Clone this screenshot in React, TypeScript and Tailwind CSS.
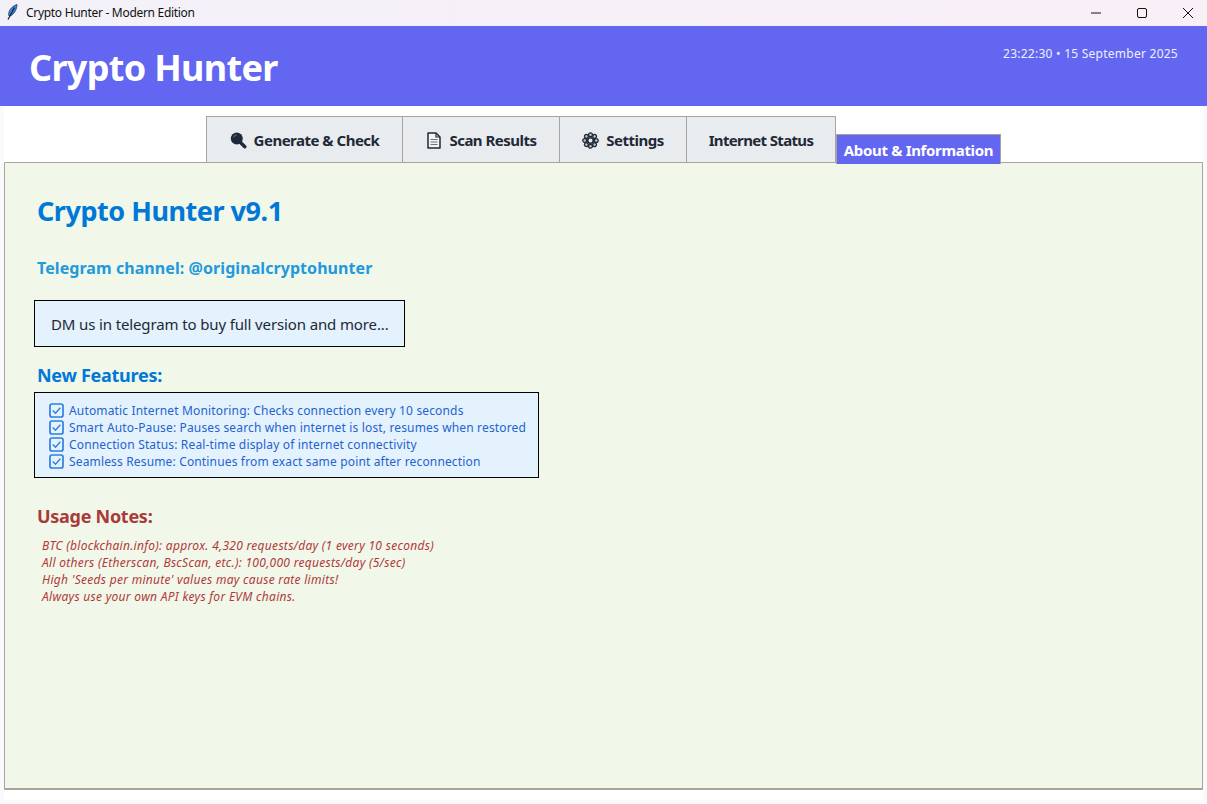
const font = "font-['Noto_Sans','Open_Sans',sans-serif]";

function Feather() {
  return (
    <svg width="12" height="16" viewBox="0 0 12 16" className="ml-[6px] -mt-[3px]">
      <path d="M11 0.500 C7.500 1.500 4 4.500 3 8 C2.500 10 2.500 11 3 12 C6 12 8.500 9 10 5.500 C10.700 3.500 11 2 11 0.500 Z" fill="#3f86dc" stroke="#1e3a5f" strokeWidth="0.800" />
      <path d="M8.500 3.500 L2 15.500" stroke="#111827" strokeWidth="1.100" fill="none" />
    </svg>
  );
}

function SearchGlyph() {
  return (
    <svg width="17" height="17" viewBox="0 0 17 17">
      <circle cx="6.800" cy="6.500" r="6" fill="#1f2937" />
      <path d="M3.600 5.500 A3.400 3.400 0 0 1 6.500 2.900" stroke="#5b6472" strokeWidth="1.100" fill="none" />
      <path d="M10.500 10.500 L14.800 14.800" stroke="#1f2937" strokeWidth="3.400" strokeLinecap="round" />
    </svg>
  );
}

function DocGlyph() {
  return (
    <svg width="14" height="17" viewBox="0 0 14 17">
      <path d="M1 1 H9 L13 5 V16 H1 Z" fill="#f3f4f6" stroke="#1f2937" strokeWidth="1.500" strokeLinejoin="round" />
      <path d="M9 1 V5 H13" fill="none" stroke="#1f2937" strokeWidth="1.200" />
      <path d="M3.500 7.500 H10.500 M3.500 10 H10.500 M3.500 12.500 H10.500" stroke="#6b7280" strokeWidth="1.200" />
    </svg>
  );
}

function GearGlyph() {
  const petals = [0, 45, 90, 135, 180, 225, 270, 315];
  return (
    <svg width="17" height="17" viewBox="0 0 17 17">
      {petals.map((a) => (
        <circle key={a} cx="8.500" cy="2.700" r="1.900" fill="#c3c8d0" stroke="#1f2937" strokeWidth="1.300" transform={`rotate(${a} 8.500 8.500)`} />
      ))}
      <circle cx="8.500" cy="8.500" r="2.800" fill="#e9ecef" stroke="#1f2937" strokeWidth="1.600" />
    </svg>
  );
}

function CheckGlyph() {
  return (
    <svg width="15" height="15" viewBox="0 0 15 15" className="shrink-0">
      <rect x="1" y="1" width="13" height="13" rx="2" fill="#e3f2fd" stroke="#2f7fdf" strokeWidth="1.700" />
      <path d="M3.800 7.500 L6.500 10.200 L11.300 4.800" fill="none" stroke="#2f7fdf" strokeWidth="1.400" />
    </svg>
  );
}

function Tab({ w, children }: { w: string; children: React.ReactNode }) {
  return (
    <div className={`${w} h-[46px] flex items-center justify-center pt-[1px] bg-[#e9ecef] border border-b-0 border-[#a8a49c] -ml-px first:ml-0 text-[15px] font-bold text-[#1f2937] tracking-[-0.5px]`}>
      {children}
    </div>
  );
}

const features = [
  "Automatic Internet Monitoring: Checks connection every 10 seconds",
  "Smart Auto-Pause: Pauses search when internet is lost, resumes when restored",
  "Connection Status: Real-time display of internet connectivity",
  "Seamless Resume: Continues from exact same point after reconnection",
];

const notes = [
  "BTC (blockchain.info): approx. 4,320 requests/day (1 every 10 seconds)",
  "All others (Etherscan, BscScan, etc.): 100,000 requests/day (5/sec)",
  "High 'Seeds per minute' values may cause rate limits!",
  "Always use your own API keys for EVM chains.",
];

export default function App() {
  return (
    <div className={`${font} w-[1207px] h-[804px] overflow-hidden flex flex-col bg-[#fafafc]`}>
      <div className="h-[26px] shrink-0 flex items-center bg-gradient-to-r from-[#f3f1f8] to-[#f9eff7]">
        <Feather />
        <span className="ml-[8px] text-[12px] text-[#111] tracking-[-0.3px]">Crypto Hunter - Modern Edition</span>
        <div className="ml-auto flex items-center">
          <svg width="12" height="12" viewBox="0 0 12 12" className="mr-[34px]"><path d="M1 6 H11" stroke="#111" strokeWidth="1" /></svg>
          <svg width="12" height="12" viewBox="0 0 12 12" className="mr-[34px]"><rect x="1.500" y="1.500" width="9" height="9" rx="1.500" fill="none" stroke="#111" strokeWidth="1" /></svg>
          <svg width="12" height="12" viewBox="0 0 12 12" className="mr-[13px]"><path d="M1 1 L11 11 M11 1 L1 11" stroke="#111" strokeWidth="1" /></svg>
        </div>
      </div>

      <div className="h-[80px] shrink-0 bg-[#6366f1] flex justify-between text-white">
        <div className="pl-[29px] pt-[18px] text-[36px] leading-[48px] font-bold tracking-[-0.68px]">Crypto Hunter</div>
        <div className="pr-[29px] pt-[19px] text-[12px] leading-[18px] text-[#eef0ff] tracking-[0.25px]">23:22:30 • 15 September 2025</div>
      </div>

      <div className="mx-[4px] h-[694px] shrink-0 bg-white flex flex-col">
        <div className="h-[56px] shrink-0 pl-[202px] flex items-end relative z-10">
          <Tab w="w-[197px]"><SearchGlyph /><span className="ml-[7px]">Generate &amp; Check</span></Tab>
          <Tab w="w-[158px]"><span className="ml-[2px] flex items-center"><DocGlyph /><span className="ml-[8px]">Scan Results</span></span></Tab>
          <Tab w="w-[128px]"><GearGlyph /><span className="ml-[7px]">Settings</span></Tab>
          <Tab w="w-[150px]"><span className="tracking-[-0.65px]">Internet Status</span></Tab>
          <div className="w-[165px] h-[30px] -mb-[2px] flex items-center justify-center pt-[1px] bg-[#6366f1] border-t border-x border-[#a8a49c] text-[15px] font-bold text-white tracking-[-0.33px]">About &amp; Information</div>
        </div>

        <div className="h-[628px] shrink-0 bg-[#f1f7e9] border border-[#a8a49c] border-b-2 rounded-[1px] pl-[32px] pt-[29px]">
          <div className="text-[27px] leading-[38px] font-bold text-[#0078d7] tracking-[-0.47px]">Crypto Hunter v9.1</div>
          <div className="mt-[27px] text-[16px] leading-[22px] font-bold text-[#2199dc] tracking-[0.07px]">Telegram channel: @originalcryptohunter</div>
          <div className="-ml-[3px] mt-[21px] w-[371px] h-[47px] border border-black bg-[#e3f2fd] flex items-center pl-[16px] pt-[1px] text-[15px] text-[#1f2937] tracking-[-0.13px]">DM us in telegram to buy full version and more...</div>
          <div className="mt-[15px] text-[18px] leading-[26px] font-bold text-[#0078d7] tracking-[-0.28px]">New Features:</div>
          <div className="-ml-[3px] mt-[4px] w-[505px] h-[86px] border border-black bg-[#e3f2fd] pl-[14px] pt-[9px]">
            {features.map((f) => (
              <div key={f} className="h-[17px] flex items-center gap-[5px] text-[12px] text-[#2563d0] tracking-[0.155px]">
                <CheckGlyph />
                <span>{f}</span>
              </div>
            ))}
          </div>
          <div className="mt-[25px] text-[18px] leading-[26px] font-bold text-[#a83a3a] tracking-[-0.28px]">Usage Notes:</div>
          <div className="ml-[5px] mt-[8px]">
            {notes.map((n) => (
              <div key={n} className="h-[17px] text-[12px] leading-[17px] italic text-[#b03a3a] tracking-[0.29px]">{n}</div>
            ))}
          </div>
        </div>
      </div>
    </div>
  );
}
